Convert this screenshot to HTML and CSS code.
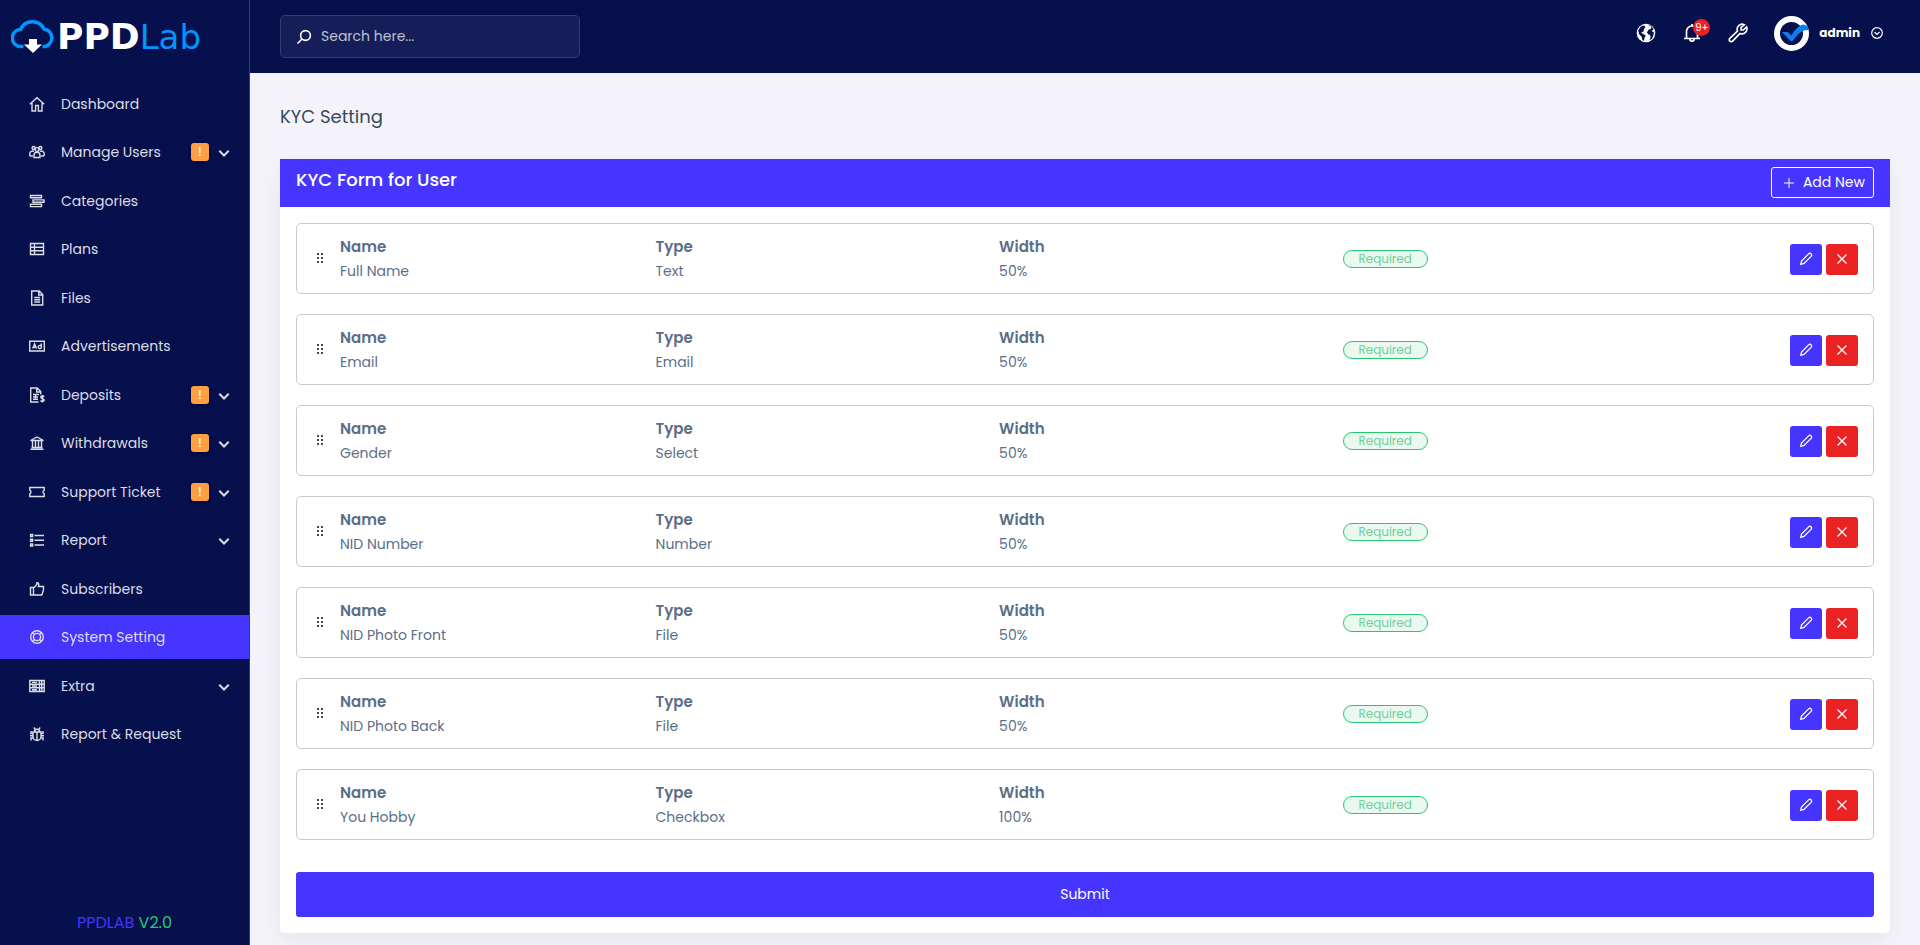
FILE: index.html
```html
<!DOCTYPE html>
<html lang="en">
  <head>
    <meta charset="UTF-8" />
    <meta name="viewport" content="width=device-width, initial-scale=1.0" />
    <title>PPDLab - KYC Setting</title>
    <link rel="stylesheet" href="styles.css">
  </head>
  <body>
    <!-- Icon set -->
    <svg class="icon-defs" aria-hidden="true">
      <symbol id="i-home" viewBox="0 0 16 16"><path d="M.8 8.300 8 1.800l7.200 6.500M3 7v8h3.600V9.500h2.800V15H13V7" /></symbol>
      <symbol id="i-users" viewBox="0 0 16 16"><circle cx="8" cy="5.500" r="1.900" /><circle cx="4.600" cy="4" r="1.500" /><circle cx="11.400" cy="4" r="1.500" /><path d="M5 13.500v-2.200a3 3 0 0 1 6 0v2.200zM.8 12V9.500A2.600 2.600 0 0 1 5 7.600M15.200 12V9.500A2.600 2.600 0 0 0 11 7.600M.8 12H4M12 12h3.200" /></symbol>
      <symbol id="i-categories" viewBox="0 0 16 16"><path d="M1.500 2.500h11v2.300h-11zM4 6.900h11v2.300H4zM1.500 11.300h11v2.300h-11z" /></symbol>
      <symbol id="i-plans" viewBox="0 0 16 16"><path d="M1.500 2.500h13v11h-13zM1.500 6.200h13M1.500 9.800h13M5.500 2.500v11" /></symbol>
      <symbol id="i-file" viewBox="0 0 16 16"><path d="M2.700 1h7.500l3.500 3.500V15h-11zM9.700 1v4h4M5.200 7.500h6M5.200 9.700h6M5.200 12h6" /></symbol>
      <symbol id="i-ad" viewBox="0 0 16 16"><path d="M.7 3.200h14.600v9.800H.7z" /><path d="M3.700 10.500 5.600 5.800l1.900 4.700M4.300 9.200H7M12.300 5.500v5M12.300 8.300a1.600 1.600 0 1 0 0 1.400" /></symbol>
      <symbol id="i-deposit" viewBox="0 0 16 16"><path d="M9.500 15H1.700V1h6.500l3.500 3.500v3M7.700 1v4h4M4 7.500h6M4 10h5M4 12.300h5M6.500 7.500v5" /><path d="M15.200 9.800c-.8-1.200-3.400-1-3.400.5 0 1.600 3.500 1 3.500 2.800 0 1.500-2.800 1.700-3.700.4M13.500 8v7.500" /></symbol>
      <symbol id="i-bank" viewBox="0 0 16 16"><path d="M1.500 5.500 8 2l6.500 3.500zM1.500 14.300h13M2.500 12.500h11M3.500 6v6.500M6.500 6v6.500M9.500 6v6.500M12.500 6v6.500" /></symbol>
      <symbol id="i-ticket" viewBox="0 0 16 16"><path d="M.8 3.500h14.400v2.800a1.800 1.800 0 0 0 0 3.400v2.800H.8V9.700a1.800 1.800 0 0 0 0-3.400z" /></symbol>
      <symbol id="i-list" viewBox="0 0 16 16"><path d="M5.500 3.500H15M5.500 8.200H15M5.500 13H15M1.600 2.500h2v2h-2zM1.600 7.200h2v2h-2zM1.600 12h2v2h-2z" /></symbol>
      <symbol id="i-thumb" viewBox="0 0 16 16"><path d="M1.500 6.500h3V14h-3zM4.500 7l3.300-3.500V1.800c1.700-.3 2.400 1 1.700 3.700h5v3.500L12.800 14H4.500" /></symbol>
      <symbol id="i-setting" viewBox="0 0 16 16"><circle cx="8" cy="8" r="6.300" /><circle cx="8" cy="8" r="3.600" /><path d="m3.500 3.500 2 2M10.500 10.500l2 2M12.500 3.500l-2 2M3.500 12.500l2-2" /></symbol>
      <symbol id="i-server" viewBox="0 0 16 16"><path d="M.8 2.500h14.400v11H.8zM.8 6.200h14.400M.8 9.800h14.400M3 4.400h5M3 8h5M3 11.700h5M10.500 2.500v11M12.700 2.500v11" /></symbol>
      <symbol id="i-bug" viewBox="0 0 16 16"><path d="M4 6h8v4.500a4 4 0 0 1-8 0zM5.300 6a2.700 2.700 0 0 1 5.400 0M8 6v8.300M4.800 1.500l1.500 2M11.200 1.500l-1.500 2M4 7.500H2V5M12 7.500h2V5M4 9.700H1M12 9.700h3M4.500 12H2v2.500M11.500 12H14v2.500" /></symbol>
      <symbol id="i-chevron" viewBox="0 0 12 12"><path d="m1.300 3.800 4.700 4.700 4.700-4.700" /></symbol>
      <symbol id="i-search" viewBox="0 0 16 16"><circle cx="9.500" cy="6.500" r="4.900" /><path d="M6 10 1.500 14.500" /></symbol>
      <symbol id="i-bell" viewBox="0 0 20 20"><path d="M4.500 15V8.500a5.500 5.500 0 0 1 11 0V15M2 15.500h16M10 1v2M7.800 16a2.200 2.200 0 0 0 4.400 0" /></symbol>
      <symbol id="i-wrench" viewBox="0 0 20 20"><path d="M16.300 1.700A5 5 0 0 0 9.500 8L1.800 15.300a1.900 1.900 0 0 0 2.800 2.800L12 10.500a5 5 0 0 0 6.500-6.600L15.300 7l-2.200-.1-.1-2.200z" /></symbol>
      <symbol id="i-plus" viewBox="0 0 14 14"><path d="M7 2v10M2 7h10" /></symbol>
      <symbol id="i-pencil" viewBox="0 0 14 14"><path d="M1.700 12.300 2.500 9 9.600 1.900a1.500 1.500 0 0 1 2.500 2.500L5 11.500z" /></symbol>
      <symbol id="i-cross" viewBox="0 0 14 14"><path d="m2.500 2.500 9 9M11.500 2.500l-9 9" /></symbol>
      <symbol id="i-drag" viewBox="0 0 16 16"><path d="M5 2h2v2H5zM9 2h2v2H9zM5 6h2v2H5zM9 6h2v2H9zM5 10h2v2H5zM9 10h2v2H9z" /></symbol>
    </svg>

    <aside class="sidebar">
      <a href="#" class="logo">
        <svg class="logo-mark" viewBox="0 0 44 34" aria-hidden="true">
          <path d="M12.500 26.500H10a8.500 8.500 0 0 1-.5-17A13 13 0 0 1 33 9a8.900 8.900 0 0 1 1 17.500h-2.500" fill="none" stroke="#0095ff" stroke-width="3.500" />
          <path d="M18 19h8v5.500h5L22 33l-9-8.500h5z" fill="#fff" />
        </svg>
        <span class="logo-text">PPD<span>Lab</span></span>
      </a>
      <nav>
        <ul class="menu">
          <li><a href="#"><svg class="icon"><use href="#i-home" /></svg><span class="menu-title">Dashboard</span></a></li>
          <li><a href="#"><svg class="icon"><use href="#i-users" /></svg><span class="menu-title">Manage Users</span><span class="menu-badge">!</span><svg class="arrow"><use href="#i-chevron" /></svg></a></li>
          <li><a href="#"><svg class="icon"><use href="#i-categories" /></svg><span class="menu-title">Categories</span></a></li>
          <li><a href="#"><svg class="icon"><use href="#i-plans" /></svg><span class="menu-title">Plans</span></a></li>
          <li><a href="#"><svg class="icon"><use href="#i-file" /></svg><span class="menu-title">Files</span></a></li>
          <li><a href="#"><svg class="icon"><use href="#i-ad" /></svg><span class="menu-title">Advertisements</span></a></li>
          <li><a href="#"><svg class="icon"><use href="#i-deposit" /></svg><span class="menu-title">Deposits</span><span class="menu-badge">!</span><svg class="arrow"><use href="#i-chevron" /></svg></a></li>
          <li><a href="#"><svg class="icon"><use href="#i-bank" /></svg><span class="menu-title">Withdrawals</span><span class="menu-badge">!</span><svg class="arrow"><use href="#i-chevron" /></svg></a></li>
          <li><a href="#"><svg class="icon"><use href="#i-ticket" /></svg><span class="menu-title">Support Ticket</span><span class="menu-badge">!</span><svg class="arrow"><use href="#i-chevron" /></svg></a></li>
          <li><a href="#"><svg class="icon"><use href="#i-list" /></svg><span class="menu-title">Report</span><svg class="arrow"><use href="#i-chevron" /></svg></a></li>
          <li><a href="#"><svg class="icon"><use href="#i-thumb" /></svg><span class="menu-title">Subscribers</span></a></li>
          <li><a href="#" class="active"><svg class="icon"><use href="#i-setting" /></svg><span class="menu-title">System Setting</span></a></li>
          <li><a href="#"><svg class="icon"><use href="#i-server" /></svg><span class="menu-title">Extra</span><svg class="arrow"><use href="#i-chevron" /></svg></a></li>
          <li><a href="#"><svg class="icon"><use href="#i-bug" /></svg><span class="menu-title">Report &amp; Request</span></a></li>
        </ul>
      </nav>
      <div class="version">PPDLAB <span>V2.0</span></div>
    </aside>

    <div class="page">
      <header class="topbar">
        <form class="search">
          <svg class="icon"><use href="#i-search" /></svg>
          <input type="search" placeholder="Search here..." aria-label="Search" />
        </form>
        <div class="topbar-right">
          <button type="button" class="nav-btn" aria-label="Visit website">
            <svg class="globe" viewBox="0 0 20 20">
              <circle cx="10" cy="10" r="9.300" fill="#fff" />
              <path d="M2.200 7.500 5 3.300l3-.8 1.500 1.500L8 6l-.5 2.500L5 9.500l2.500 1.700 2.300 1.300-1.300 2.200-.5 3-1.500-.5-1-3.700-2.200-2zM12.500 2l3 1.500-.5 2.300-2.500 1L11 9.500l1.500 2 1.700.5.300 2.500-1 2.800 2.500-1.500 1.300-3.300.7-3L15.500 8l2-1.500-1.500-3L13.500 1.800z" fill="#05104d" />
            </svg>
          </button>
          <button type="button" class="nav-btn" aria-label="Notifications">
            <svg class="icon-lg"><use href="#i-bell" /></svg>
            <span class="count">9+</span>
          </button>
          <button type="button" class="nav-btn" aria-label="System setting">
            <svg class="icon-lg"><use href="#i-wrench" /></svg>
          </button>
          <button type="button" class="profile">
            <svg class="avatar" viewBox="0 0 35 35" aria-hidden="true">
              <circle cx="17.500" cy="17.500" r="14.500" fill="none" stroke="#fff" stroke-width="6" />
              <path d="M8 16h5.500l4 3.500C22 12 26 8.500 30 8.500l4 2v3.500C28 13.500 24 18 18.500 25h-2z" fill="#0a7ff5" />
            </svg>
            <span class="profile-name">admin</span>
            <svg class="profile-arrow" viewBox="0 0 12 12" aria-hidden="true"><circle cx="6" cy="6" r="5.300" /><path d="M3.500 5 6 7.500 8.500 5" /></svg>
          </button>
        </div>
      </header>

      <main class="content">
        <h1>KYC Setting</h1>

        <form class="card">
          <div class="card-header">
            <h2>KYC Form for User</h2>
            <button type="button" class="btn-add"><svg><use href="#i-plus" /></svg>Add New</button>
          </div>
          <div class="card-body">
            <div class="fields">
              <div class="field">
                <div class="cell with-handle"><svg class="handle"><use href="#i-drag" /></svg><div><strong>Name</strong><p>Full Name</p></div></div>
                <div class="cell"><strong>Type</strong><p>Text</p></div>
                <div class="cell"><strong>Width</strong><p>50%</p></div>
                <div class="cell"><span class="badge">Required</span></div>
                <div class="actions">
                  <button type="button" class="btn-edit" aria-label="Edit"><svg><use href="#i-pencil" /></svg></button>
                  <button type="button" class="btn-delete" aria-label="Remove"><svg><use href="#i-cross" /></svg></button>
                </div>
              </div>
              <div class="field">
                <div class="cell with-handle"><svg class="handle"><use href="#i-drag" /></svg><div><strong>Name</strong><p>Email</p></div></div>
                <div class="cell"><strong>Type</strong><p>Email</p></div>
                <div class="cell"><strong>Width</strong><p>50%</p></div>
                <div class="cell"><span class="badge">Required</span></div>
                <div class="actions">
                  <button type="button" class="btn-edit" aria-label="Edit"><svg><use href="#i-pencil" /></svg></button>
                  <button type="button" class="btn-delete" aria-label="Remove"><svg><use href="#i-cross" /></svg></button>
                </div>
              </div>
              <div class="field">
                <div class="cell with-handle"><svg class="handle"><use href="#i-drag" /></svg><div><strong>Name</strong><p>Gender</p></div></div>
                <div class="cell"><strong>Type</strong><p>Select</p></div>
                <div class="cell"><strong>Width</strong><p>50%</p></div>
                <div class="cell"><span class="badge">Required</span></div>
                <div class="actions">
                  <button type="button" class="btn-edit" aria-label="Edit"><svg><use href="#i-pencil" /></svg></button>
                  <button type="button" class="btn-delete" aria-label="Remove"><svg><use href="#i-cross" /></svg></button>
                </div>
              </div>
              <div class="field">
                <div class="cell with-handle"><svg class="handle"><use href="#i-drag" /></svg><div><strong>Name</strong><p>NID Number</p></div></div>
                <div class="cell"><strong>Type</strong><p>Number</p></div>
                <div class="cell"><strong>Width</strong><p>50%</p></div>
                <div class="cell"><span class="badge">Required</span></div>
                <div class="actions">
                  <button type="button" class="btn-edit" aria-label="Edit"><svg><use href="#i-pencil" /></svg></button>
                  <button type="button" class="btn-delete" aria-label="Remove"><svg><use href="#i-cross" /></svg></button>
                </div>
              </div>
              <div class="field">
                <div class="cell with-handle"><svg class="handle"><use href="#i-drag" /></svg><div><strong>Name</strong><p>NID Photo Front</p></div></div>
                <div class="cell"><strong>Type</strong><p>File</p></div>
                <div class="cell"><strong>Width</strong><p>50%</p></div>
                <div class="cell"><span class="badge">Required</span></div>
                <div class="actions">
                  <button type="button" class="btn-edit" aria-label="Edit"><svg><use href="#i-pencil" /></svg></button>
                  <button type="button" class="btn-delete" aria-label="Remove"><svg><use href="#i-cross" /></svg></button>
                </div>
              </div>
              <div class="field">
                <div class="cell with-handle"><svg class="handle"><use href="#i-drag" /></svg><div><strong>Name</strong><p>NID Photo Back</p></div></div>
                <div class="cell"><strong>Type</strong><p>File</p></div>
                <div class="cell"><strong>Width</strong><p>50%</p></div>
                <div class="cell"><span class="badge">Required</span></div>
                <div class="actions">
                  <button type="button" class="btn-edit" aria-label="Edit"><svg><use href="#i-pencil" /></svg></button>
                  <button type="button" class="btn-delete" aria-label="Remove"><svg><use href="#i-cross" /></svg></button>
                </div>
              </div>
              <div class="field">
                <div class="cell with-handle"><svg class="handle"><use href="#i-drag" /></svg><div><strong>Name</strong><p>You Hobby</p></div></div>
                <div class="cell"><strong>Type</strong><p>Checkbox</p></div>
                <div class="cell"><strong>Width</strong><p>100%</p></div>
                <div class="cell"><span class="badge">Required</span></div>
                <div class="actions">
                  <button type="button" class="btn-edit" aria-label="Edit"><svg><use href="#i-pencil" /></svg></button>
                  <button type="button" class="btn-delete" aria-label="Remove"><svg><use href="#i-cross" /></svg></button>
                </div>
              </div>
            </div>
            <button type="submit" class="btn-submit">Submit</button>
          </div>
        </form>
      </main>
    </div>
  </body>
</html>
```
FILE: styles.css
```css
* {
  box-sizing: border-box;
}

body {
  display: flex;
  min-height: 100vh;
  margin: 0;
  font-family: Poppins, Inter, sans-serif;
  font-size: 14px;
  line-height: 24px;
  color: #5b6e88;
  background-color: #f3f3f9;
}

h1,
h2,
p {
  margin: 0;
}

a {
  text-decoration: none;
}

button,
input {
  font-family: inherit;
  font-size: 14px;
}

button {
  padding: 0;
  border: none;
  cursor: pointer;
}

svg {
  flex: none;
  fill: none;
  stroke: currentColor;
}

.icon-defs {
  display: none;
}

.icon {
  width: 16px;
  height: 16px;
  stroke-width: 1.4;
}

/* Sidebar */
.sidebar {
  display: flex;
  flex: none;
  flex-direction: column;
  width: 250px;
  background-color: #05104d;
  border-right: 1px solid #353d6c;
}

.logo {
  display: flex;
  align-items: center;
  height: 82px;
  padding: 0 0 8px 11px;
}

.logo-mark {
  width: 44px;
  height: 34px;
  margin-right: 2px;
  stroke: none;
}

.logo-text {
  color: #fff;
  font-family: "DejaVu Sans", sans-serif;
  font-size: 36px;
  font-weight: bold;
  line-height: 36px;
}

.logo-text span {
  color: #0095ff;
  font-size: 34px;
  font-weight: normal;
}

.menu {
  margin: 0;
  padding: 0;
  list-style: none;
}

.menu li {
  margin-bottom: 5px;
}

.menu li:nth-child(odd) {
  margin-bottom: 4px;
}

.menu a {
  display: flex;
  align-items: center;
  height: 44px;
  padding: 0 19px 0 29px;
  color: #dddde4;
}

.menu a:hover,
.menu a.active {
  background-color: #4634ff;
}

.menu-title {
  flex: 1;
  margin-left: 16px;
}

.menu-badge {
  width: 18px;
  height: 18px;
  border-radius: 3px;
  background-color: #ff9f43;
  box-shadow: 0 2px 5px rgba(0, 0, 0, 0.3);
  color: #fff;
  font-size: 12px;
  font-weight: 500;
  line-height: 18px;
  text-align: center;
}

.arrow {
  width: 12px;
  height: 12px;
  margin: 2px 0 0 9px;
  stroke-width: 2;
}

.version {
  margin-top: auto;
  padding-bottom: 10px;
  color: #4634ff;
  font-size: 16px;
  text-align: center;
}

.version span {
  color: #28c76f;
}

/* Top bar */
.page {
  flex: 1;
  min-width: 0;
}

.topbar {
  display: flex;
  align-items: center;
  justify-content: space-between;
  height: 73px;
  padding: 0 37px 0 30px;
  background-color: #05104d;
}

.search {
  display: flex;
  align-items: center;
  width: 300px;
  height: 43px;
  padding: 0 15px;
  border: 1px solid #353d6c;
  border-radius: 5px;
  background-color: #151e59;
  color: #fff;
}

.search .icon {
  stroke-width: 1.6;
}

.search input {
  flex: 1;
  min-width: 0;
  margin-left: 9px;
  padding: 0;
  border: none;
  outline: none;
  background: none;
  color: #fff;
}

.search input::placeholder {
  color: #bfc1cd;
}

.topbar-right {
  display: flex;
  align-items: center;
  gap: 26px;
  padding-bottom: 7px;
}

.nav-btn {
  display: flex;
  position: relative;
  background: none;
  color: #fff;
}

.globe,
.icon-lg {
  width: 20px;
  height: 20px;
  stroke-width: 1.7;
}

.globe {
  stroke: none;
}

.count {
  position: absolute;
  top: -4px;
  right: -8px;
  width: 17px;
  height: 17px;
  border-radius: 50%;
  background-color: #eb2222;
  font-size: 10px;
  line-height: 17px;
  text-align: center;
}

.profile {
  display: flex;
  align-items: center;
  background: none;
  color: #fff;
}

.avatar {
  width: 35px;
  height: 35px;
  margin-right: 10px;
  stroke: none;
}

.profile-name {
  font-size: 12px;
  font-weight: 700;
}

.profile-arrow {
  width: 12px;
  height: 12px;
  margin-left: 11px;
  stroke-width: 1.2;
}

/* Content */
.content {
  padding: 30px 30px 12px;
}

h1 {
  margin-bottom: 28px;
  color: #34495e;
  font-size: 18px;
  font-weight: 400;
  line-height: 28px;
}

.card {
  border-radius: 5px;
  background-color: #fff;
  box-shadow: 0 8px 24px rgba(18, 38, 63, 0.06);
}

.card-header {
  display: flex;
  align-items: flex-start;
  justify-content: space-between;
  height: 48px;
  padding: 8px 16px;
  background-color: #4634ff;
  color: #fff;
}

h2 {
  font-size: 18px;
  font-weight: 500;
  line-height: 26px;
}

.btn-add {
  display: flex;
  align-items: center;
  height: 31px;
  padding: 0 8px 0 10px;
  border: 1px solid #fff;
  border-radius: 3px;
  background: none;
  color: #fff;
}

.btn-add svg {
  width: 14px;
  height: 14px;
  margin-right: 7px;
}

.card-body {
  padding: 16px;
}

.fields {
  display: grid;
  gap: 20px;
  margin-bottom: 32px;
}

.field {
  display: grid;
  grid-template-columns: 2fr 2fr 2fr 2fr 1fr;
  align-items: center;
  padding: 11px 15px 10px;
  border: 1px solid #cacaca;
  border-radius: 5px;
}

.cell strong {
  display: block;
  font-size: 15px;
  font-weight: 600;
}

.with-handle {
  display: flex;
  align-items: center;
  gap: 12px;
}

.handle {
  width: 16px;
  height: 16px;
  fill: #34495e;
  stroke: none;
}

.badge {
  display: block;
  width: 85px;
  height: 18px;
  border: 1px solid #28c76f;
  border-radius: 9px;
  background-color: #e9f9f0;
  color: #71cf9c;
  font-size: 12px;
  line-height: 16px;
  text-align: center;
}

.actions {
  display: flex;
  justify-content: flex-end;
  gap: 4px;
}

.actions button {
  display: flex;
  align-items: center;
  justify-content: center;
  width: 32px;
  height: 31px;
  border-radius: 3px;
  background-color: #4634ff;
  color: #fff;
}

.actions .btn-delete {
  background-color: #eb2222;
}

.actions svg {
  width: 14px;
  height: 14px;
  stroke-width: 1.3;
}

.btn-submit {
  display: block;
  width: 100%;
  height: 45px;
  border-radius: 3px;
  background-color: #4634ff;
  color: #fff;
}
```
